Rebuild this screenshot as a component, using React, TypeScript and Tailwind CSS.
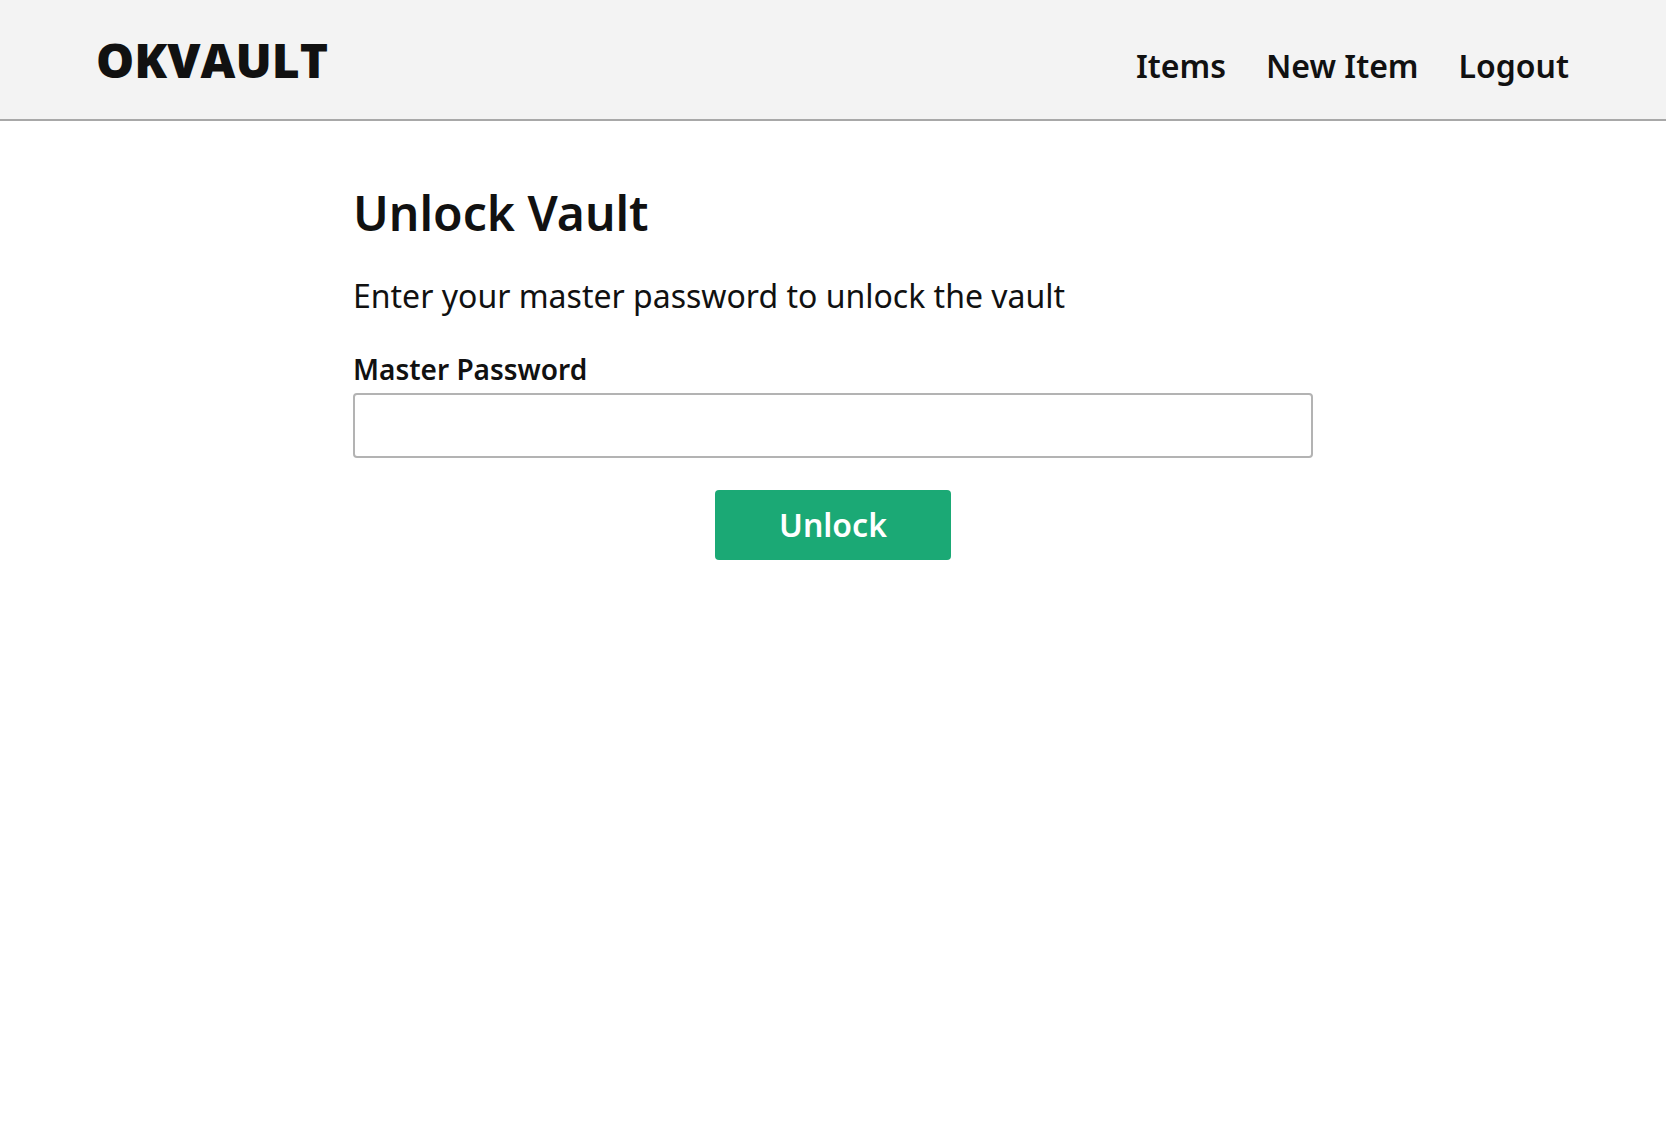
import React, { useState } from "react";

const App: React.FC = () => {
  const [password, setPassword] = useState("");

  const navLinks = ["Items", "New Item", "Logout"];

  return (
    <div className="min-h-screen bg-white text-[#111111] font-['Noto_Sans',sans-serif]">
      {/* Header */}
      <header className="h-[121px] bg-[#f3f3f3] border-b-2 border-[#a8a8a8] pl-24 pr-[97px] pt-[36px] flex items-baseline justify-between">
        <div className="text-[48px] leading-[48px] font-extrabold font-['Open_Sans',sans-serif]">
          OKVAULT
        </div>
        <nav className="flex items-baseline gap-[40px]">
          {navLinks.map((link) => (
            <a
              key={link}
              href="#"
              className="text-[32px] leading-[40px] font-semibold text-[#111111]"
            >
              {link}
            </a>
          ))}
        </nav>
      </header>

      {/* Unlock form */}
      <main className="max-w-[960px] mx-auto pt-[64px]">
        <h1 className="text-[48px] leading-[56px] font-semibold">
          Unlock Vault
        </h1>
        <p className="mt-[35px] text-[32px] leading-[40px]">
          Enter your master password to unlock the vault
        </p>
        <form
          onSubmit={(e) => e.preventDefault()}
          className="mt-[35px] flex flex-col"
        >
          <label
            htmlFor="master-password"
            className="text-[28px] leading-[36px] font-semibold"
          >
            Master Password
          </label>
          <input
            id="master-password"
            type="password"
            value={password}
            onChange={(e) => setPassword(e.target.value)}
            className="mt-[6px] h-[65px] w-full border-2 border-[#b3b3b3] rounded-[4px] px-4 text-[28px] outline-none"
          />
          <div className="mt-[32px] flex justify-center">
            <button
              type="submit"
              className="w-[236px] h-[70px] bg-[#1ba975] text-white rounded-[4px] text-[32px] font-semibold"
            >
              Unlock
            </button>
          </div>
        </form>
      </main>
    </div>
  );
};

export default App;
